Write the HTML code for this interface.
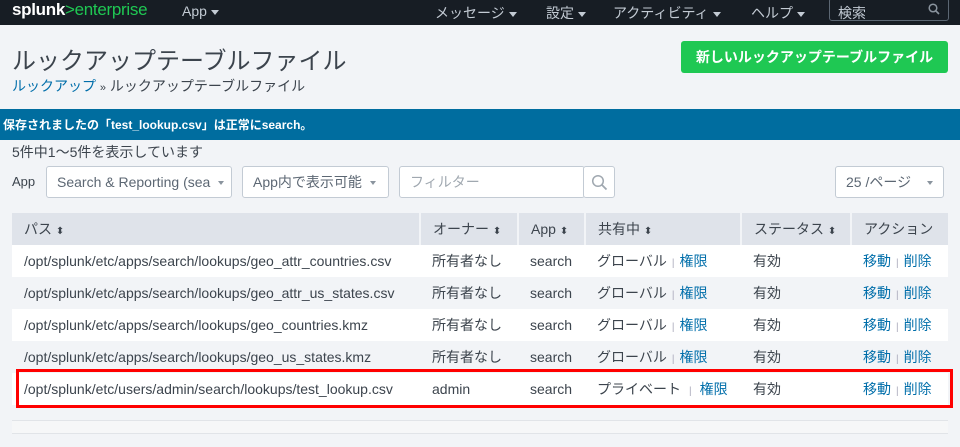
<!DOCTYPE html>
<html><head><meta charset="utf-8"><style>
*{box-sizing:border-box;margin:0;padding:0}
body{width:960px;height:447px;overflow:hidden;background:#f2f4f7;font-family:"Liberation Sans","Noto Sans CJK JP",sans-serif;color:#3c444d;position:relative}
.abs{position:absolute;white-space:nowrap}
.nav{position:absolute;left:0;top:0;width:960px;height:25px;background:#171d24}
.nav .abs{color:#c3cbd4;font-size:14px;top:3px}
.car{display:inline-block;width:0;height:0;border-left:4px solid transparent;border-right:4px solid transparent;border-top:5px solid #c3cbd4;vertical-align:middle;margin-left:4px}
.blue{color:#006eaa}
table{position:absolute;left:12px;top:213px;width:936px;border-collapse:collapse;font-size:14px}
th{background:#dfe3ea;height:32px;text-align:left;font-weight:normal;padding-left:12px;border-right:2px solid #f2f4f7;color:#3c444d;font-size:14px}
th:last-child{border-right:none}
td{height:32px;padding-left:12px;color:#3c444d}
tr.w td{background:#fff}tr.g td{background:#f2f4f7}
.s{font-size:10px}
.sep{color:#aab;font-size:10px;margin:0 5px}
.box{position:absolute;background:#fff;border:1px solid #c3cbd4;border-radius:3px;font-size:14px;color:#5c6773;padding-left:10px;line-height:30px;height:32px}
.c2{display:inline-block;width:0;height:0;border-left:3px solid transparent;border-right:3px solid transparent;border-top:4px solid #8a949e;vertical-align:middle;margin-left:8px}
</style></head><body>
<div class="nav">
<div class="abs" style="left:12px;top:0px;font-size:17px;font-weight:bold;color:#fff;letter-spacing:-0.3px">splunk<span style="color:#1fc853;font-weight:normal">&gt;enterprise</span></div>
<div class="abs" style="left:182px">App<span class="car"></span></div>
<div class="abs" style="left:435px">メッセージ<span class="car"></span></div>
<div class="abs" style="left:546px">設定<span class="car"></span></div>
<div class="abs" style="left:613px">アクティビティ<span class="car"></span></div>
<div class="abs" style="left:751px">ヘルプ<span class="car"></span></div>
<div style="position:absolute;left:829px;top:-2px;width:120px;height:23px;border:1px solid #5c6773;border-radius:3px"></div>
<div class="abs" style="left:838px">検索</div>
<svg class="abs" style="left:928px;top:3px" width="12" height="12" viewBox="0 0 12 12"><circle cx="5" cy="5" r="3.8" fill="none" stroke="#8a949e" stroke-width="1.5"/><path d="M8 8l3 3" stroke="#8a949e" stroke-width="1.6"/></svg>
</div>
<div class="abs" style="left:12px;top:41px;font-size:24px;color:#3c444d">ルックアップテーブルファイル</div>
<div class="abs" style="left:12px;top:76px;font-size:14px"><span class="blue">ルックアップ</span> <span style="font-size:11px">»</span> ルックアップテーブルファイル</div>
<div style="position:absolute;left:681px;top:41px;width:267px;height:32px;background:#1fc853;border-radius:3px;color:#fff;font-weight:bold;font-size:14px;text-align:center;line-height:32px">新しいルックアップテーブルファイル</div>
<div style="position:absolute;left:0;top:109px;width:960px;height:31px;background:#006d9f"></div>
<div class="abs" style="left:3px;top:116px;font-size:12px;font-weight:bold;color:#fff">保存されましたの「test_lookup.csv」は正常にsearch。</div>
<div class="abs" style="left:12px;top:142px;font-size:14px">5件中1〜5件を表示しています</div>
<div class="abs" style="left:12px;top:174px;font-size:13px">App</div>
<div class="box" style="left:46px;top:166px;width:186px;overflow:hidden">Search &amp; Reporting (sea<span class="c2"></span></div>
<div class="box" style="left:242px;top:166px;width:147px">App内で表示可能<span class="c2"></span></div>
<div class="box" style="left:399px;top:166px;width:186px;color:#a0a8b0;font-size:14px">フィルター</div>
<div class="box" style="left:583px;top:166px;width:32px;padding:0"><svg style="position:absolute;left:7px;top:7px" width="17" height="17" viewBox="0 0 17 17"><circle cx="7" cy="7" r="5.3" fill="none" stroke="#a0a8b0" stroke-width="1.5"/><path d="M11 11l4.5 4.5" stroke="#a0a8b0" stroke-width="1.8"/></svg></div>
<div class="box" style="left:835px;top:166px;width:109px">25 /ページ<span class="c2" style="margin-left:16px"></span></div>
<table>
<tr><th style="width:408px">パス <span class="s">⬍</span></th><th style="width:98px">オーナー <span class="s">⬍</span></th><th style="width:67px">App <span class="s">⬍</span></th><th style="width:156px">共有中 <span class="s">⬍</span></th><th style="width:110px">ステータス <span class="s">⬍</span></th><th>アクション</th></tr>
<tr class="w"><td>/opt/splunk/etc/apps/search/lookups/geo_attr_countries.csv</td><td>所有者なし</td><td>search</td><td>グローバル<span class="sep">|</span><span class="blue">権限</span></td><td>有効</td><td><span class="blue">移動</span><span class="sep">|</span><span class="blue">削除</span></td></tr>
<tr class="g"><td>/opt/splunk/etc/apps/search/lookups/geo_attr_us_states.csv</td><td>所有者なし</td><td>search</td><td>グローバル<span class="sep">|</span><span class="blue">権限</span></td><td>有効</td><td><span class="blue">移動</span><span class="sep">|</span><span class="blue">削除</span></td></tr>
<tr class="w"><td>/opt/splunk/etc/apps/search/lookups/geo_countries.kmz</td><td>所有者なし</td><td>search</td><td>グローバル<span class="sep">|</span><span class="blue">権限</span></td><td>有効</td><td><span class="blue">移動</span><span class="sep">|</span><span class="blue">削除</span></td></tr>
<tr class="g"><td>/opt/splunk/etc/apps/search/lookups/geo_us_states.kmz</td><td>所有者なし</td><td>search</td><td>グローバル<span class="sep">|</span><span class="blue">権限</span></td><td>有効</td><td><span class="blue">移動</span><span class="sep">|</span><span class="blue">削除</span></td></tr>
<tr class="w"><td>/opt/splunk/etc/users/admin/search/lookups/test_lookup.csv</td><td>admin</td><td>search</td><td>プライベート<span class="sep" style="margin:0 8px">|</span><span class="blue">権限</span></td><td>有効</td><td><span class="blue">移動</span><span class="sep">|</span><span class="blue">削除</span></td></tr>
</table>
<div style="position:absolute;left:12px;top:420px;width:936px;height:14px;background:#f6f7f8;border-top:1px solid #e1e4e8;border-bottom:1px solid #e1e4e8"></div>
<div style="position:absolute;left:16px;top:369px;width:937px;height:39px;border:3px solid #f00"></div>
</body></html>
